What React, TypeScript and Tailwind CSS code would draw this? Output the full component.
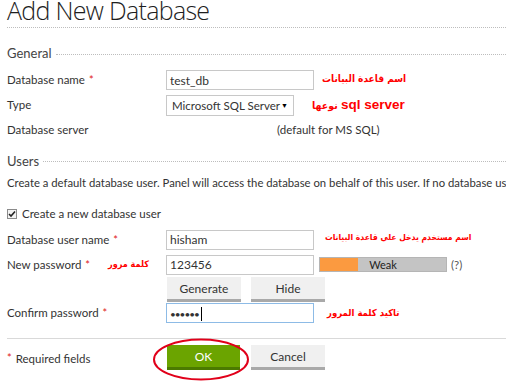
import React from "react";

function Req() {
  return <span className="text-[#e02020] text-[11px] ml-[4px]">*</span>;
}

function Ar({ children, className = "" }: { children: React.ReactNode; className?: string }) {
  return (
    <span
      dir="rtl"
      className={"shrink-0 whitespace-nowrap font-['DejaVu_Sans_Condensed','DejaVu_Sans',sans-serif] font-stretch-condensed font-bold text-[#f00] leading-none " + className}
    >
      {children}
    </span>
  );
}

function Btn({ children, green = false }: { children: React.ReactNode; green?: boolean }) {
  return (
    <div
      className={
        "shrink-0 h-[25px] pt-[1px] flex items-center justify-center text-[12px] border-b-[3px] " +
        (green
          ? "bg-[#6ba400] border-[#4b7a00] text-white w-[73px]"
          : "bg-[#f0f0f0] border-[#a9a9a9] text-[#333] w-[74px]")
      }
    >
      {children}
    </div>
  );
}

const inputCls = "shrink-0 whitespace-nowrap w-[148px] h-[20px] border px-[3px] pt-[1px] flex items-center text-[12px]";

export default function App() {
  return (
    <div className="w-[506px] h-[381px] overflow-hidden bg-white text-[#333] font-['Lato',sans-serif] text-[11.5px] relative">
      <div className="pl-[7px]">
        {/* Title */}
        <div className="h-[28px] border-b border-dotted border-[#bdbdbd] overflow-visible">
          <div className="font-['Open_Sans',sans-serif] text-[25px] font-light leading-[20px] text-[#1e1e1e] tracking-[-0.7px] whitespace-nowrap">
            Add New Database
          </div>
        </div>

        {/* General */}
        <div className="h-[39px] pt-[13px] flex items-center">
          <span className="text-[13px] text-[#444]">General</span>
          <div className="flex-1 ml-[4px] border-t border-dotted border-[#bdbdbd]" />
        </div>

        <div className="h-[25px] pt-[1px] flex items-center whitespace-nowrap">
          <div className="w-[159px] shrink-0">Database name<Req /></div>
          <div className={inputCls + " border-[#c8c8c8]"}>test_db</div>
          <Ar className="ml-[8px] text-[10px] -mt-[3px]">اسم قاعدة البيانات</Ar>
        </div>

        <div className="h-[25px] pt-[1px] flex items-center whitespace-nowrap">
          <div className="w-[159px] shrink-0">Type</div>
          <div className="shrink-0 w-[128px] h-[21px] border border-[#c8c8c8] pl-[5px] pr-[5px] pt-[1px] flex items-center justify-between text-[11.5px]">
            <span>Microsoft SQL Server</span>
            <span className="text-[7px] text-black">▼</span>
          </div>
          <span dir="rtl" className="shrink-0 ml-[18px] font-['DejaVu_Sans_Condensed','DejaVu_Sans',sans-serif] font-stretch-condensed font-bold text-[#f00] text-[10.5px] leading-none">
            <span className="font-['Liberation_Sans',sans-serif] font-stretch-normal text-[13.5px]">sql server</span> نوعها
          </span>
        </div>

        <div className="h-[25px] pt-[1px] flex items-center whitespace-nowrap">
          <div className="w-[159px] shrink-0">Database server</div>
          <div className="ml-[111px]">(default for MS SQL)</div>
        </div>

        {/* Users */}
        <div className="h-[32px] pt-[7px] flex items-center">
          <span className="text-[13px] text-[#444]">Users</span>
          <div className="flex-1 ml-[4px] border-t border-dotted border-[#bdbdbd]" />
        </div>

        <div className="h-[18px] pt-[1px] flex items-center whitespace-nowrap text-[11.3px]">
          Create a default database user. Panel will access the database on behalf of this user. If no database user is specified
        </div>

        <div className="mt-[8px] h-[26px] pt-[1px] flex items-center">
          <div className="w-[10px] h-[10px] border border-[#8a8a8a] bg-[#f2f2f2] flex items-center justify-center">
            <svg width="8" height="8" viewBox="0 0 8 8">
              <path d="M1 4 L3 6 L7 1.5" stroke="#222" strokeWidth="1.6" fill="none" />
            </svg>
          </div>
          <span className="ml-[5px]">Create a new database user</span>
        </div>

        <div className="h-[26px] pt-[1px] flex items-center whitespace-nowrap">
          <div className="w-[159px] shrink-0">Database user name<Req /></div>
          <div className={inputCls + " border-[#c8c8c8]"}>hisham</div>
          <Ar className="ml-[11px] text-[8.5px] -mt-[5px]">اسم مستخدم يدخل علي قاعدة البيانات</Ar>
        </div>

        <div className="h-[24px] pt-[1px] flex items-center whitespace-nowrap">
          <div className="w-[101px] shrink-0">New password<Req /></div>
          <div className="w-[58px] shrink-0 -mt-[3px]">
            <Ar className="text-[9px]">كلمة مرور</Ar>
          </div>
          <div className={inputCls + " border-[#c8c8c8]"}>123456</div>
          <div className="shrink-0 ml-[5px] w-[128px] h-[15px] border border-[#b5b5b5] bg-[#c4c4c4] relative">
            <div className="absolute left-0 top-0 bottom-0 w-[38px] bg-[#fb9a40]" />
            <div className="absolute inset-0 flex items-center justify-center text-[11px] text-[#222] leading-none">Weak</div>
          </div>
          <span className="ml-[4px] text-[#555]">(?)</span>
        </div>

        <div className="h-[26px] flex items-start pt-[1px]">
          <div className="w-[160px] shrink-0" />
          <Btn>Generate</Btn>
          <div className="w-[10px] shrink-0" />
          <Btn>Hide</Btn>
        </div>

        <div className="h-[22px] flex items-center whitespace-nowrap">
          <div className="w-[159px] shrink-0">Confirm password<Req /></div>
          <div className={inputCls + " border-[#8dbbe6]"}>
            <span className="tracking-[-1px] text-[10px] leading-none">••••••</span>
            <span className="inline-block w-[1px] h-[14px] bg-black ml-[2px]" />
          </div>
          <Ar className="ml-[13px] text-[9.5px]">تاكيد كلمة المرور</Ar>
        </div>

        <div className="mt-[14px] border-t border-[#d9d9d9]" />

        <div className="pt-[6px] flex items-start">
          <div className="w-[160px] shrink-0 h-[25px] pt-[2px] flex items-center">
            <span className="text-[#e02020] text-[11px] mr-[4px]">*</span>Required fields
          </div>
          <div className="relative shrink-0">
            <Btn green>OK</Btn>
            <svg className="absolute left-[-15px] top-[-7px]" width="98" height="43" viewBox="0 0 98 43">
              <ellipse cx="49" cy="21.5" rx="47" ry="20" stroke="#e1001a" strokeWidth="2" fill="none" />
            </svg>
          </div>
          <div className="w-[11px] shrink-0" />
          <Btn>Cancel</Btn>
        </div>
      </div>
    </div>
  );
}
